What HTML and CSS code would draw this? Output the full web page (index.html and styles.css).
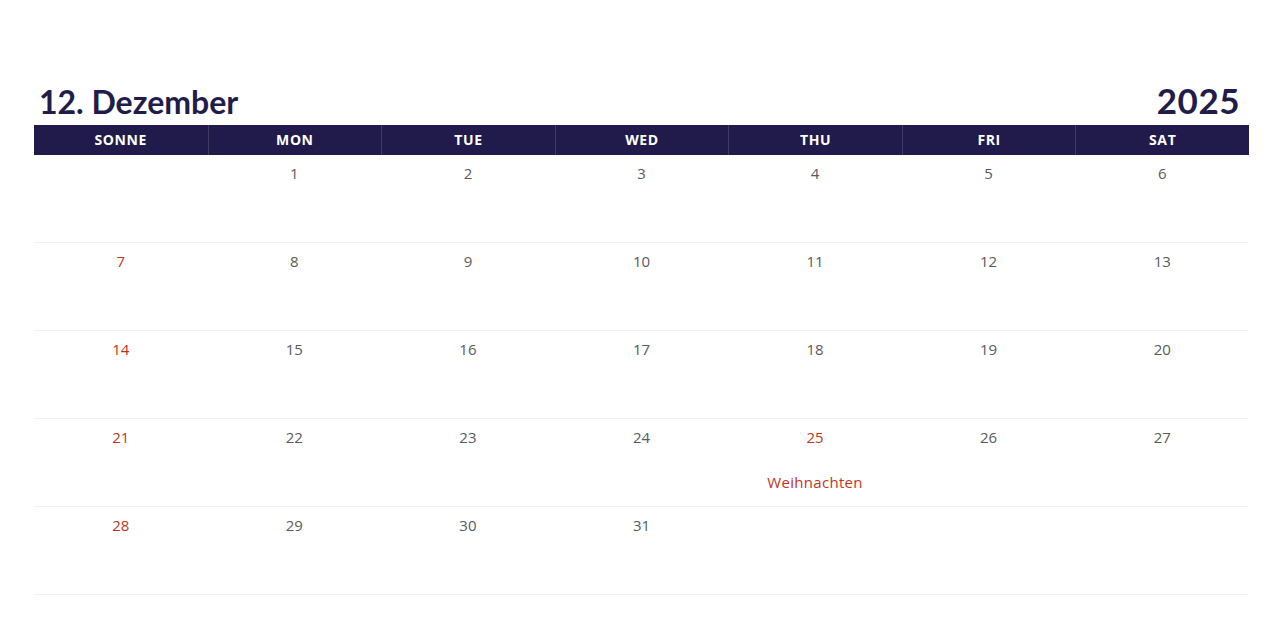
FILE: index.html
```html
<!DOCTYPE html>
<html lang="de">
<head>
<meta charset="utf-8">
<link rel="stylesheet" href="styles.css">
</head>
<body>
<div class="page">
  <div class="titlebar">
    <h1 class="month">12. Dezember</h1>
    <div class="year">2025</div>
  </div>
  <div class="cal">
    <div class="head">SONNE</div>
    <div class="head">MON</div>
    <div class="head">TUE</div>
    <div class="head">WED</div>
    <div class="head">THU</div>
    <div class="head">FRI</div>
    <div class="head">SAT</div>

    <div class="cell"></div>
    <div class="cell"><span class="num">1</span></div>
    <div class="cell"><span class="num">2</span></div>
    <div class="cell"><span class="num">3</span></div>
    <div class="cell"><span class="num">4</span></div>
    <div class="cell"><span class="num">5</span></div>
    <div class="cell"><span class="num">6</span></div>

    <div class="cell"><span class="num sun">7</span></div>
    <div class="cell"><span class="num">8</span></div>
    <div class="cell"><span class="num">9</span></div>
    <div class="cell"><span class="num">10</span></div>
    <div class="cell"><span class="num">11</span></div>
    <div class="cell"><span class="num">12</span></div>
    <div class="cell"><span class="num">13</span></div>

    <div class="cell"><span class="num sun">14</span></div>
    <div class="cell"><span class="num">15</span></div>
    <div class="cell"><span class="num">16</span></div>
    <div class="cell"><span class="num">17</span></div>
    <div class="cell"><span class="num">18</span></div>
    <div class="cell"><span class="num">19</span></div>
    <div class="cell"><span class="num">20</span></div>

    <div class="cell"><span class="num sun">21</span></div>
    <div class="cell"><span class="num">22</span></div>
    <div class="cell"><span class="num">23</span></div>
    <div class="cell"><span class="num">24</span></div>
    <div class="cell"><span class="num sun">25</span><span class="event">Weihnachten</span></div>
    <div class="cell"><span class="num">26</span></div>
    <div class="cell"><span class="num">27</span></div>

    <div class="cell"><span class="num sun">28</span></div>
    <div class="cell"><span class="num">29</span></div>
    <div class="cell"><span class="num">30</span></div>
    <div class="cell"><span class="num">31</span></div>
    <div class="cell"></div>
    <div class="cell"></div>
    <div class="cell"></div>
  </div>
</div>
</body>
</html>
```
FILE: styles.css
```css
html, body {
  margin: 0;
  padding: 0;
  background: #ffffff;
}
.page {
  width: 1215px;
  margin-left: 34px;
  padding-top: 78px;
  font-family: "Open Sans", "Liberation Sans", sans-serif;
}
.titlebar {
  display: flex;
  justify-content: space-between;
  align-items: baseline;
  padding: 0 9px 0 5px;
  height: 47px;
  box-sizing: border-box;
}
.month, .year {
  margin: 0;
  font-family: "Lato", "Open Sans", sans-serif;
  font-size: 32px;
  font-weight: 700;
  color: #221c4b;
  line-height: 44px;
}
.year {
  font-size: 35px;
  letter-spacing: 0.5px;
}
.cal {
  display: grid;
  grid-template-columns: repeat(7, 1fr);
}
.head {
  background: #211b4c;
  color: #ffffff;
  font-size: 14px;
  font-weight: 700;
  letter-spacing: 0.6px;
  text-align: center;
  height: 30px;
  line-height: 29px;
  border-left: 1px solid rgba(255, 255, 255, 0.14);
}
.head:first-child {
  border-left: none;
}
.cell {
  border-bottom: 1px solid #f1f1f3;
  display: flex;
  flex-direction: column;
  align-items: center;
  padding-top: 8px;
  box-sizing: border-box;
  height: 88px;
}
.num {
  font-size: 15px;
  line-height: 20px;
  color: #5a5a5a;
}
.num.sun {
  color: #c4341c;
}
.event {
  margin-top: 25px;
  font-size: 15px;
  line-height: 20px;
  color: #c4341c;
  letter-spacing: 0.3px;
}
```
